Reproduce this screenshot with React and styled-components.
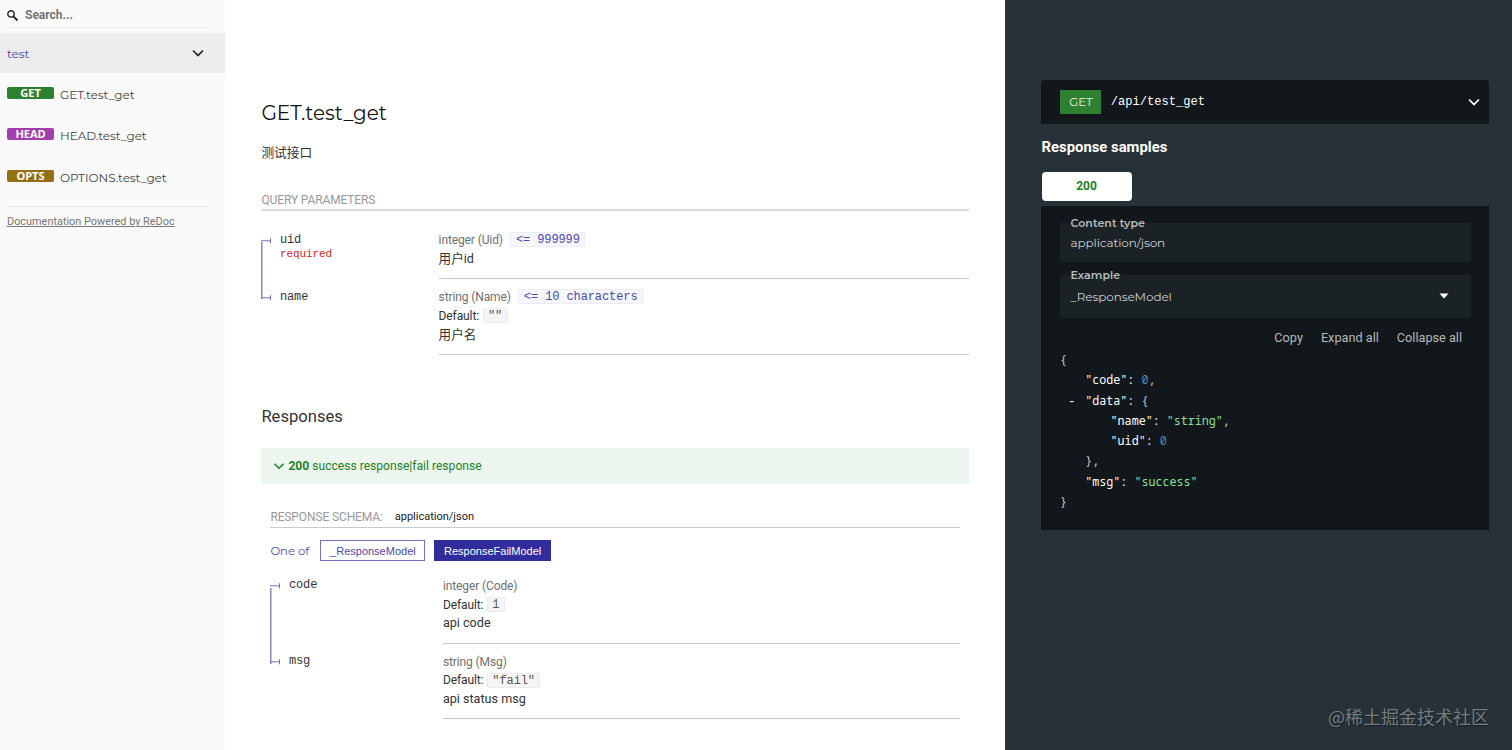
import React from 'react';
import styled, { createGlobalStyle } from 'styled-components';

const heading = `Montserrat, Inter, sans-serif`;
const body = `Roboto, "Noto Sans CJK SC", sans-serif`;
const mono = `"Liberation Mono", monospace`;

const GlobalStyle = createGlobalStyle`
  * {
    box-sizing: border-box;
  }

  body {
    margin: 0;
    background: #fff;
    color: #333;
    font-family: ${body};
    font-size: 12px;
    overflow: hidden;
  }
`;

const Page = styled.div`
  display: grid;
  grid-template-columns: 225px 780px 507px;
  width: 1512px;
  height: 750px;
  overflow: hidden;
`;

/* ---------- sidebar ---------- */

const Sidebar = styled.nav`
  background: #fafafa;
`;

const SearchBox = styled.div`
  display: flex;
  align-items: center;
  gap: 7px;
  height: 25px;
  margin: 3px 17px 5px 7px;
  border-bottom: 1px solid #ececec;
  color: #757575;
  font-size: 12px;
  font-weight: 700;
`;

const Group = styled.div`
  display: flex;
  align-items: center;
  justify-content: space-between;
  height: 40px;
  padding: 0 17px 0 7px;
  background: #ededed;
  color: #4c48ab;
  font-family: ${heading};
  font-size: 12px;
  letter-spacing: -0.05px;
`;

const Operations = styled.div`
  padding-top: 0.6px;
`;

const Operation = styled.div`
  display: flex;
  align-items: center;
  height: 41.5px;
  padding-left: 7px;
  color: #444;
  font-family: ${heading};
  font-size: 12px;
  letter-spacing: -0.07px;
`;

const Badge = styled.span`
  width: 47px;
  height: 12px;
  margin: 0 6px 3px 0;
  border-radius: 2px;
  background: ${(props) => props.$color};
  color: #fff;
  font-family: "Noto Sans", sans-serif;
  font-size: 11.1px;
  font-weight: 700;
  line-height: 12px;
  text-align: center;
`;

const PoweredBy = styled.div`
  margin: 8.4px 17px 0 7px;
  padding-top: 6px;
  border-top: 1px solid #e4e4e4;
  color: #777;
  font-size: 10.9px;
  line-height: 17px;
  text-decoration: underline;
`;

/* ---------- middle column ---------- */

const Content = styled.main`
  padding: 98px 36px 0 36.4px;
  background: #fff;
`;

const Title = styled.h1`
  margin: 0;
  color: #111;
  font-family: ${heading};
  font-size: 20px;
  font-weight: 400;
  line-height: 30px;
`;

const Description = styled.p`
  margin: 15px 0 0;
  font-size: 12.7px;
  line-height: 20px;
`;

const SectionLabel = styled.div`
  display: flex;
  height: 20px;
  margin-top: ${(props) => props.$top}px;
  border-bottom: ${(props) => props.$rule || '1px solid #c4cacd'};
  color: #999;
  letter-spacing: -0.12px;
  line-height: 18px;
`;

const MimeType = styled.span`
  margin-left: 12px;
  color: #222;
  font-size: 11px;
  letter-spacing: 0;
`;

const Fields = styled.div`
  padding-top: ${(props) => props.$top}px;
`;

const Field = styled.div`
  display: grid;
  grid-template-columns: ${(props) => props.$nameWidth}px 1fr;
`;

const FieldName = styled.div`
  display: flex;
  padding-top: 8.5px;
  font-family: ${mono};
  font-size: 12px;
  letter-spacing: -0.1px;
  line-height: 18.6px;
  background-image: linear-gradient(
    to bottom,
    ${(props) => (props.$last ? '#8a87c2' : 'transparent')} 0,
    ${(props) => (props.$last ? '#8a87c2' : 'transparent')} 20px,
    ${(props) => (props.$last ? 'transparent' : '#8a87c2')} 20px
  );
  background-size: 1.5px 100%;
  background-repeat: no-repeat;
`;

const Required = styled.div`
  margin-top: -2px;
  color: #d41f1c;
  font-size: 11px;
  line-height: 14px;
`;

const Details = styled.div`
  padding: 8.5px 0 10px;
  border-bottom: 1px solid #c4cacd;
`;

const Line = styled.div`
  display: flex;
  align-items: center;
  height: 18.75px;
  color: ${(props) => (props.$muted ? '#707070' : '#333')};
  letter-spacing: -0.11px;
`;

const FieldDescription = styled(Line)`
  padding-bottom: 1.5px;
  font-size: 12.6px;
  letter-spacing: 0;
`;

const Chip = styled.code`
  height: 15px;
  margin-left: ${(props) => (props.$accent ? 7.5 : 3.5)}px;
  padding: 0 4.5px;
  border: 1px solid ${(props) => (props.$accent ? '#ececf8' : '#ebebeb')};
  border-radius: 2px;
  background: ${(props) => (props.$accent ? '#f6f6fd' : '#f5f5f5')};
  color: ${(props) => (props.$accent ? '#4d49ab' : '#555')};
  font-family: ${mono};
  font-size: 12px;
  letter-spacing: -0.1px;
  line-height: 15px;
`;

const SubTitle = styled.h3`
  margin: 49px 0 19.4px;
  font-size: 16.6px;
  font-weight: 400;
  line-height: 25px;
`;

const ResponseBar = styled.div`
  display: flex;
  align-items: center;
  height: 36px;
  padding-left: 9px;
  background: #edf6ee;
  color: #1d8127;
  font-size: 12.1px;

  strong {
    margin-right: 3px;
  }
`;

const ResponseBody = styled.div`
  padding: 0 9px;
`;

const OneOf = styled.div`
  display: flex;
  align-items: center;
  height: 21px;
  margin-top: 12px;
  color: #4c48ab;
  font-family: ${heading};
  font-size: 11.6px;
`;

const ModelButton = styled.button`
  width: ${(props) => props.$width}px;
  height: 21px;
  margin: 0 9px 0 0;
  padding: 0;
  border: 1px solid ${(props) => (props.$active ? '#302c9c' : '#7572bd')};
  background: ${(props) => (props.$active ? '#302c9c' : '#fff')};
  color: ${(props) => (props.$active ? '#fff' : '#4c48ab')};
  font-family: "Liberation Sans", sans-serif;
  font-size: 11px;
`;

const OneOfLabel = styled.span`
  width: 50px;
`;

/* ---------- right column ---------- */

const Samples = styled.aside`
  display: flex;
  flex-direction: column;
  padding: 80px 23px 20px 36px;
  background: #263238;
  color: #fff;
`;

const Endpoint = styled.div`
  display: flex;
  align-items: center;
  height: 43.5px;
  padding: 0 5px 0 19.4px;
  border-radius: 3px 3px 0 0;
  background: #11171a;
  font-family: ${mono};
  font-size: 12.1px;

  svg {
    margin-left: auto;
  }
`;

const Verb = styled.span`
  width: 41px;
  height: 24px;
  margin-right: 9.3px;
  background: #2f8132;
  color: #e6f2e6;
  font-family: ${heading};
  font-size: 11.5px;
  line-height: 24px;
  text-align: center;
`;

const SamplesTitle = styled.h3`
  margin: 13px 0 14px 0.5px;
  font-size: 14.85px;
  font-weight: 700;
  line-height: 21px;
`;

const Tab = styled.div`
  width: 90px;
  height: 29px;
  margin: 0 0 5px 0.5px;
  border-radius: 4px;
  background: #fff;
  color: #1d8127;
  font-size: 12px;
  font-weight: 700;
  letter-spacing: -0.1px;
  line-height: 29px;
  text-align: center;
`;

const Panel = styled.div`
  height: 324px;
  padding: 9px 18px 0 19px;
  background: #11171a;
`;

const SelectLabel = styled.div`
  height: 16px;
  margin-bottom: -8px;
  padding-left: 10.5px;
  color: #b6babc;
  font-family: ${heading};
  font-size: 11px;
  font-weight: 600;
  letter-spacing: 0.05px;
  line-height: 16px;
`;

const Select = styled.div`
  display: flex;
  align-items: center;
  justify-content: space-between;
  height: ${(props) => props.$height}px;
  margin-bottom: 5px;
  padding: 0 22.5px 0 10.5px;
  background: #1b2225;
  color: #cdd0d1;
  font-family: ${heading};
  font-size: 12px;
  letter-spacing: -0.1px;
`;

const Actions = styled.div`
  display: flex;
  justify-content: flex-end;
  gap: 18px;
  margin-top: 10px;
  padding-right: 9px;
  color: #b4b7b8;
  font-size: 12.7px;
  line-height: 20px;
`;

const Json = styled.div`
  margin-top: 1.5px;
  color: #c4c7c8;
  font-family: "Noto Sans Mono", "DejaVu Sans Mono", monospace;
  font-size: 11.7px;
`;

const JsonLine = styled.div`
  height: 20.3px;
  padding-left: ${(props) => props.$depth * 25.3}px;
  line-height: 20.3px;
  white-space: pre;
`;

const Toggle = styled.span`
  display: inline-block;
  width: 17px;
  margin-left: -17px;
  color: #fff;
`;

const Key = styled.span`
  color: #fff;
`;

const Num = styled.span`
  color: #4a8bb3;
`;

const Str = styled.span`
  color: #8fe09a;
`;

const Watermark = styled.div`
  margin-top: auto;
  align-self: flex-end;
  color: #737c81;
  font-family: "Noto Sans CJK SC", sans-serif;
  font-size: 18px;
  line-height: 28px;
  text-shadow: 1px 1px 1px rgba(0, 0, 0, 0.4);
`;

const Chevron = ({ size, color }) => (
  <svg width={size} height={size} viewBox="0 0 24 24" fill={color}>
    <polygon points="17.3 8.3 12 13.6 6.7 8.3 5.3 9.7 12 16.4 18.7 9.7" />
  </svg>
);

const SearchIcon = () => (
  <svg width="11" height="11" viewBox="0 0 1000 1000" fill="#222">
    <path d="M968.2,849.4L667.3,549c83.9-136.5,66.7-317.4-51.7-435.6C477.1-25,252.5-25,113.9,113.4c-138.5,138.3-138.5,362.6,0,501C219.2,730.1,413.2,743,547.6,666.5l301.9,301.4c43.6,43.6,76.9,14.9,104.2-12.4C981,928.3,1011.8,893,968.2,849.4z M524.5,522c-88.9,88.7-233,88.7-321.8,0c-88.9-88.7-88.9-232.6,0-321.3c88.9-88.7,233-88.7,321.8,0C613.4,289.4,613.4,433.3,524.5,522z" />
  </svg>
);

const TreeMark = styled.svg`
  flex: none;
  width: 10px;
  height: 18.6px;
  margin-right: 8.5px;
`;

function FieldRow({ name, required, last, nameWidth, type, constraint, defaultValue, description }) {
  return (
    <Field $nameWidth={nameWidth}>
      <FieldName $last={last}>
        <TreeMark viewBox="0 0 10 18.6" fill="none" stroke="#7370b5">
          <path d="M0 9.8H9.5M9.5 7.3V12.3" />
        </TreeMark>
        <div>
          {name}
          {required && <Required>required</Required>}
        </div>
      </FieldName>
      <Details>
        <Line $muted>
          {type}
          {constraint && <Chip $accent>{constraint}</Chip>}
        </Line>
        {defaultValue && (
          <Line>
            Default: <Chip>{defaultValue}</Chip>
          </Line>
        )}
        <FieldDescription>{description}</FieldDescription>
      </Details>
    </Field>
  );
}

function App() {
  return (
    <Page>
      <GlobalStyle />
      <Sidebar>
        <SearchBox>
          <SearchIcon />
          Search...
        </SearchBox>
        <Group>
          test
          <Chevron size={20} color="#222" />
        </Group>
        <Operations>
          <Operation>
            <Badge $color="#2f8132">GET</Badge>
            GET.test_get
          </Operation>
          <Operation>
            <Badge $color="#a23dad">HEAD</Badge>
            HEAD.test_get
          </Operation>
          <Operation>
            <Badge $color="#947014">OPTS</Badge>
            OPTIONS.test_get
          </Operation>
        </Operations>
        <PoweredBy>Documentation Powered by ReDoc</PoweredBy>
      </Sidebar>

      <Content>
        <Title>GET.test_get</Title>
        <Description>测试接口</Description>
        <SectionLabel $top={28} $rule="2px solid #d9dddd">
          QUERY PARAMETERS
        </SectionLabel>
        <Fields $top={11}>
          <FieldRow
            name="uid"
            required
            nameWidth={177.2}
            type="integer (Uid)"
            constraint="<= 999999"
            description="用户id"
          />
          <FieldRow
            name="name"
            last
            nameWidth={177.2}
            type="string (Name)"
            constraint="<= 10 characters"
            defaultValue={'""'}
            description="用户名"
          />
        </Fields>

        <SubTitle>Responses</SubTitle>
        <ResponseBar>
          <Chevron size={18} color="#1d8127" />
          <strong>200</strong>
          success response|fail response
        </ResponseBar>
        <ResponseBody>
          <SectionLabel $top={24}>
            RESPONSE SCHEMA:
            <MimeType>application/json</MimeType>
          </SectionLabel>
          <OneOf>
            <OneOfLabel>One of</OneOfLabel>
            <ModelButton $width={105}>_ResponseModel</ModelButton>
            <ModelButton $width={116.5} $active>
              ResponseFailModel
            </ModelButton>
          </OneOf>
          <Fields $top={6.8}>
            <FieldRow
              name="code"
              nameWidth={172.5}
              type="integer (Code)"
              defaultValue="1"
              description="api code"
            />
            <FieldRow
              name="msg"
              last
              nameWidth={172.5}
              type="string (Msg)"
              defaultValue={'"fail"'}
              description="api status msg"
            />
          </Fields>
        </ResponseBody>
      </Content>

      <Samples>
        <Endpoint>
          <Verb>GET</Verb>
          /api/test_get
          <Chevron size={20} color="#fff" />
        </Endpoint>
        <SamplesTitle>Response samples</SamplesTitle>
        <Tab>200</Tab>
        <Panel>
          <SelectLabel>Content type</SelectLabel>
          <Select $height={39}>application/json</Select>
          <SelectLabel>Example</SelectLabel>
          <Select $height={43}>
            _ResponseModel
            <svg width="10" height="6" viewBox="0 0 10 6" fill="#fff">
              <path d="M0.5 0.5H9.5L5 5.5Z" />
            </svg>
          </Select>
          <Actions>
            <span>Copy</span>
            <span>Expand all</span>
            <span>Collapse all</span>
          </Actions>
          <Json>
            <JsonLine $depth={0}>{'{'}</JsonLine>
            <JsonLine $depth={1}>
              <Key>"code":</Key> <Num>0</Num>,
            </JsonLine>
            <JsonLine $depth={1}>
              <Toggle>-</Toggle>
              <Key>"data":</Key> {'{'}
            </JsonLine>
            <JsonLine $depth={2}>
              <Key>"name":</Key> <Str>"string"</Str>,
            </JsonLine>
            <JsonLine $depth={2}>
              <Key>"uid":</Key> <Num>0</Num>
            </JsonLine>
            <JsonLine $depth={1}>{'},'}</JsonLine>
            <JsonLine $depth={1}>
              <Key>"msg":</Key> <Str>"success"</Str>
            </JsonLine>
            <JsonLine $depth={0}>{'}'}</JsonLine>
          </Json>
        </Panel>
        <Watermark>@稀土掘金技术社区</Watermark>
      </Samples>
    </Page>
  );
}

export default App;
